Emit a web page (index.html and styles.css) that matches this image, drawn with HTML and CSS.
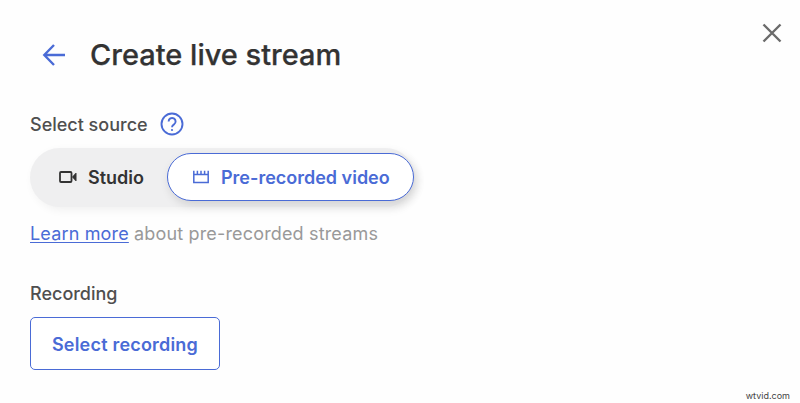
FILE: index.html
```html
<!DOCTYPE html>
<html lang="en">
<head>
<meta charset="utf-8">
<title>Create live stream</title>
<link rel="stylesheet" href="styles.css">
</head>
<body>
<main class="panel">
  <header class="head">
    <svg class="back" viewBox="0 0 24 24" width="24" height="24"><path d="M23 12H2.500M12 2 2.300 12l9.700 10"/></svg>
    <h1 class="title">Create live stream</h1>
  </header>
  <div class="label-row">
    <span class="label">Select source</span>
    <svg class="help" viewBox="0 0 24 24" width="24" height="24"><circle cx="12" cy="12" r="10.500"/><path d="M8.600 9.400a3.500 3.500 0 1 1 5.400 3c-1.300.8-2 1.400-2 2.800"/><circle class="dot" cx="12" cy="18" r="1.100"/></svg>
  </div>
  <div class="toggle">
    <div class="opt">
      <svg class="ico" viewBox="0 0 18 14" width="18" height="14"><rect x="1" y="2" width="11.500" height="10" rx="1"/><path class="fill" d="M13 7l3.500-4h1v8h-1z"/></svg>
      <span>Studio</span>
    </div>
    <div class="opt active">
      <svg class="ico thin" viewBox="0 0 18 14" width="18" height="14"><path d="M.8 4.500h14.400v8H.8zM.8 4.500V.8M4.400 4.500V.8M8 4.500V.8M11.600 4.500V.8M15.200 4.500V.8"/></svg>
      <span>Pre-recorded video</span>
    </div>
  </div>
  <p class="note"><a class="link" href="#">Learn more</a> about pre-recorded streams</p>
  <div class="label rec">Recording</div>
  <button class="select" type="button">Select recording</button>
</main>
<svg class="close" viewBox="0 0 20 20" width="20" height="20"><path d="M1.500 1.500l17 17M18.500 1.500l-17 17"/></svg>
<span class="mark">wtvid.com</span>
</body>
</html>
```
FILE: styles.css
```css
* { box-sizing: border-box; }
html, body { margin: 0; height: 100%; }
body {
  background: #fefefe;
  font-family: "Inter", "Liberation Sans", sans-serif;
  color: #333;
  overflow: hidden;
  position: relative;
}
.panel { padding: 32px 0 0 30px; display: flex; flex-direction: column; align-items: flex-start; }
.head { display: flex; align-items: center; height: 46px; padding-left: 12px; }
.back { fill: none; stroke: #4a6bd6; stroke-width: 2.400; margin-right: 24px; }
.title { margin: 0; font-size: 29px; font-weight: 500; color: #333; line-height: 46px; -webkit-text-stroke: .25px #333; }
.label-row { display: flex; align-items: center; margin-top: 33px; height: 26px; }
.label { font-size: 18px; font-weight: 500; color: #4f4f4f; }
.help { fill: none; stroke: #4a6bd6; stroke-width: 1.900; margin-left: 12px; }
.help .dot { fill: #4a6bd6; stroke: none; }
.toggle {
  display: flex; align-items: center; width: 385px; height: 59px; margin-top: 11px;
  padding: 0 0 1px 29px; background: #efeff0; border-radius: 30px;
  box-shadow: 3px 3px 10px rgba(0,0,0,.06);
}
.opt { display: flex; align-items: center; font-size: 18px; font-weight: 600; color: #333; }
.opt:first-child { width: 108px; gap: 11px; }
.ico { fill: none; stroke: currentColor; stroke-width: 1.800; flex: none; }
.ico.thin { stroke-width: 1.500; }
.ico .fill { fill: currentColor; stroke: none; }
.active {
  width: 247px; height: 48px; gap: 10px; padding-left: 25px; color: #4a6bd6; background: #fff;
  border: 1.700px solid #4a6bd6; border-radius: 24px;
  box-shadow: 2px 4px 10px rgba(0,0,0,.12);
}
.note { margin: 15px 0 0; font-size: 18px; letter-spacing: .16px; color: #999; line-height: 24px; }
.link { color: #4a6bd6; text-decoration: underline; text-underline-offset: 2px; }
.rec { margin-top: 35px; line-height: 26px; }
.select {
  margin-top: 10px; width: 190px; height: 53px; padding: 2px 0 0; background: #fff; color: #4a6bd6;
  border: 1.700px solid #4a6bd6; border-radius: 5px; font: 600 18px "Inter", "Liberation Sans", sans-serif; letter-spacing: .2px;
}
.close { position: absolute; left: 762px; top: 23px; fill: none; stroke: #6b6b6b; stroke-width: 2.400; }
.mark { position: absolute; right: 10px; bottom: 2px; font-size: 9px; color: #444; }
```
